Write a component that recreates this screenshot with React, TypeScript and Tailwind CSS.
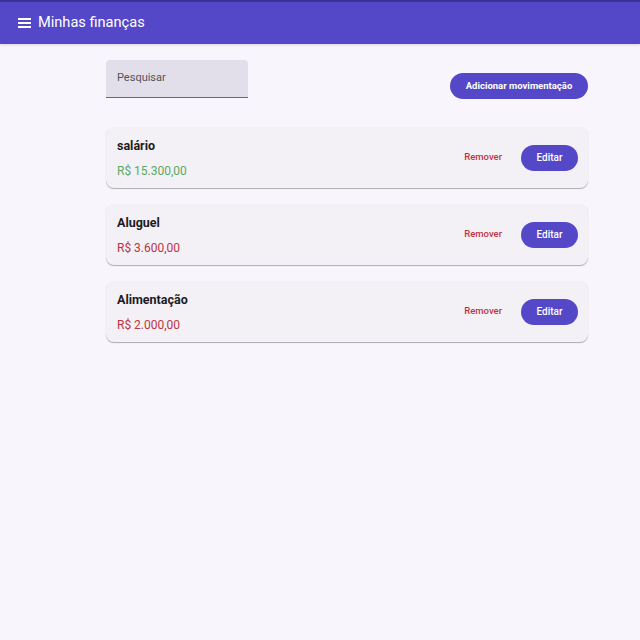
import React from "react";

type Movimentacao = {
  nome: string;
  valor: string;
  entrada: boolean;
};

const movimentacoes: Movimentacao[] = [
  { nome: "salário", valor: "R$ 15.300,00", entrada: true },
  { nome: "Aluguel", valor: "R$ 3.600,00", entrada: false },
  { nome: "Alimentação", valor: "R$ 2.000,00", entrada: false },
];

function Item({ item }: { item: Movimentacao }) {
  return (
    <div className="flex items-center justify-between h-[61px] pl-[11px] pr-[10px] rounded-lg bg-[#f3f0f6] shadow-[0_1px_1px_rgba(0,0,0,0.3)]">
      <div className="flex flex-col gap-[9px] pt-[2px]">
        <span className="text-[12.5px] font-bold text-[#1d1b20] leading-4">
          {item.nome}
        </span>
        <span
          className={`text-[12px] leading-4 ${
            item.entrada ? "text-[#5aa965]" : "text-[#c0343f]"
          }`}
        >
          {item.valor}
        </span>
      </div>
      <div className="flex items-center gap-[19px]">
        <button className="text-[9.5px] font-medium text-[#c0343f]">Remover</button>
        <button className="h-[26px] w-[57px] rounded-full bg-[#5448c8] text-[10px] font-medium text-white">
          Editar
        </button>
      </div>
    </div>
  );
}

export default function App() {
  return (
    <div className="min-h-[640px] bg-[#f8f6fc] font-['Roboto',sans-serif]">
      <header className="h-[44px] flex items-center gap-[7px] pl-[18px] bg-[#5448c8] border-t-2 border-[#3b3496] shadow-sm">
        <svg width="13" height="10" viewBox="0 0 13 10" fill="white">
          <rect x="0" y="0" width="13" height="2" />
          <rect x="0" y="4" width="13" height="2" />
          <rect x="0" y="8" width="13" height="2" />
        </svg>
        <span className="text-[14.6px] text-white">Minhas finanças</span>
      </header>

      <main className="w-[482px] ml-[106px] pt-[16px]">
        <div className="flex items-end justify-between">
          <div className="h-[38px] w-[142px] rounded-t bg-[#e2dfea] border-b border-[#6b6870] flex items-center pl-[11px]">
            <span className="text-[11px] text-[#55525b]">Pesquisar</span>
          </div>
          <button className="h-[26px] w-[138px] mb-[-1px] rounded-full bg-[#5448c8] text-[9.5px] font-bold text-white">
            Adicionar movimentação
          </button>
        </div>

        <div className="flex flex-col gap-[16px] mt-[29px]">
          {movimentacoes.map((m) => (
            <Item key={m.nome} item={m} />
          ))}
        </div>
      </main>
    </div>
  );
}
